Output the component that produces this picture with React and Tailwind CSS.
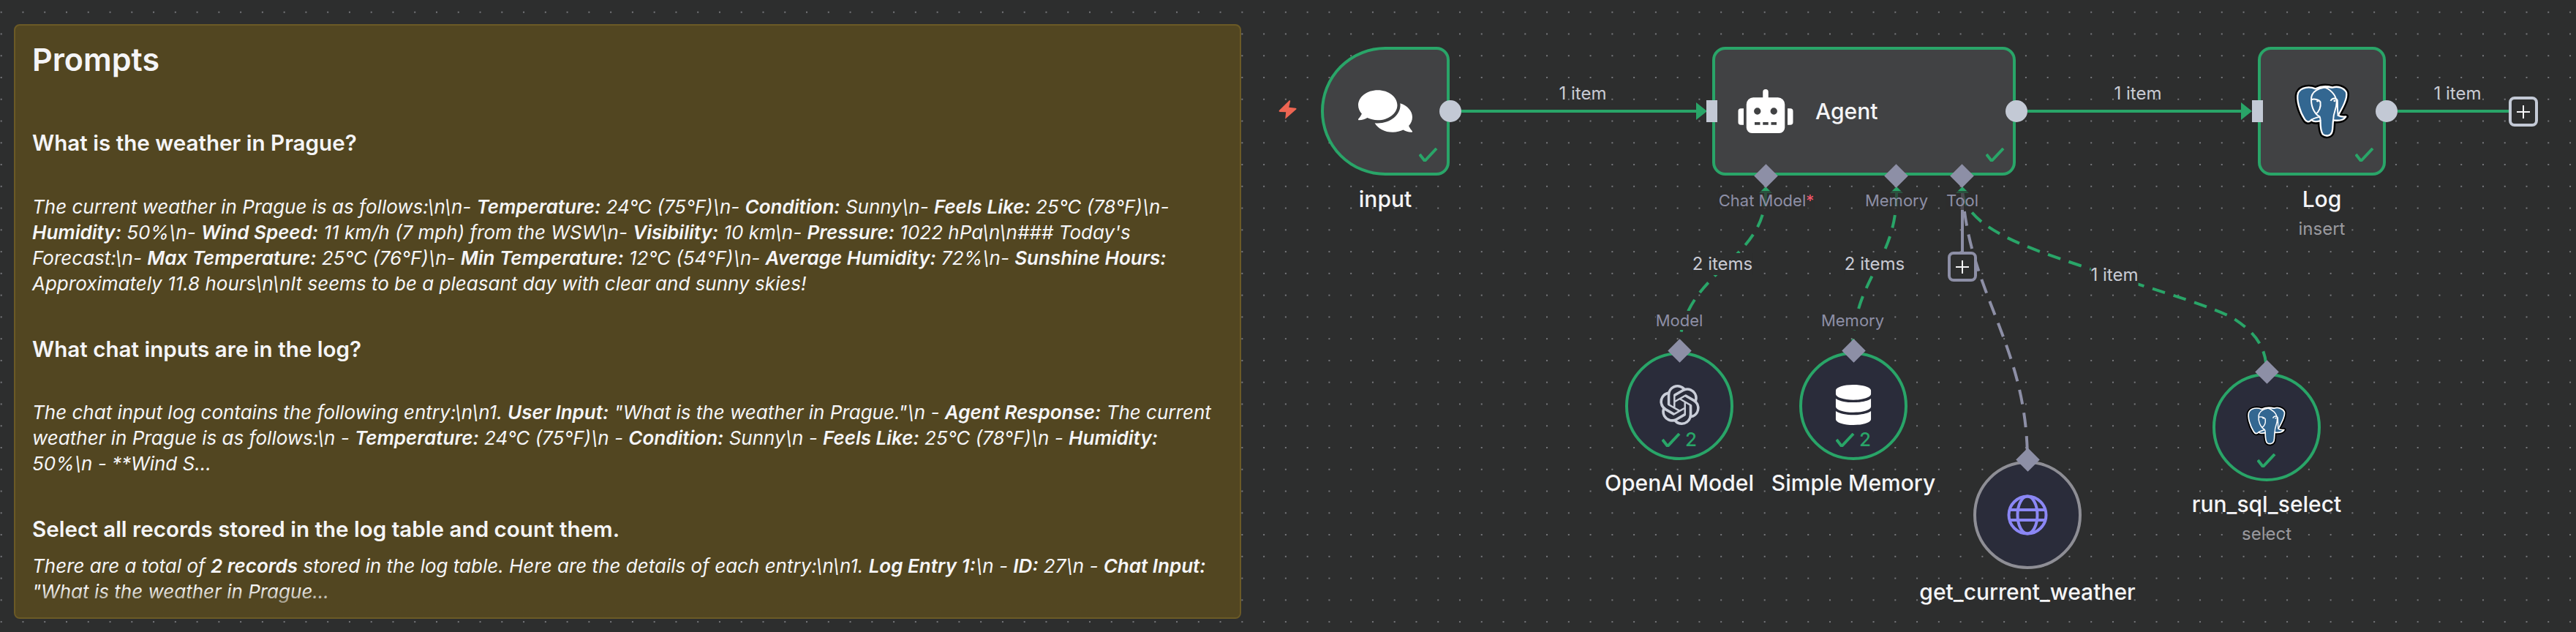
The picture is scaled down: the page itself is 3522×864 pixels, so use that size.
import React from "react";
import { FaComments, FaRobot, FaDatabase } from "react-icons/fa";
import { SiOpenai } from "react-icons/si";

const Elephant = ({ className }) => (
  <svg viewBox="48 28 229 229" className={className} fill="none" strokeLinejoin="round">
    <path
      d="M135 50C110 40 75 42 63 68C55 95 70 145 90 175C98 188 108 190 118 178C124 186 140 186 155 182C155 200 155 225 165 238C178 248 198 244 203 228C208 210 205 195 208 180C225 182 250 182 260 165C250 166 235 164 228 160C245 130 268 90 262 65C252 45 225 38 205 45C180 38 155 40 135 50Z"
      fill="#000"
      stroke="#000"
      strokeWidth="22"
    />
    <path
      d="M135 50C110 40 75 42 63 68C55 95 70 145 90 175C98 188 108 190 118 178C124 186 140 186 155 182C155 200 155 225 165 238C178 248 198 244 203 228C208 210 205 195 208 180C225 182 250 182 260 165C250 166 235 164 228 160C245 130 268 90 262 65C252 45 225 38 205 45C180 38 155 40 135 50Z"
      fill="#336791"
      stroke="#fff"
      strokeWidth="7"
    />
    <path
      d="M205 45C170 40 125 50 118 85C115 115 125 150 152 165C156 172 155 178 155 182M165 42C195 50 220 75 222 105C222 135 208 145 208 180M118 178C130 170 145 168 152 165M118 95C130 90 150 95 155 105C158 125 150 145 135 155M197 100C205 85 222 88 225 98C226 120 225 140 228 160"
      stroke="#fff"
      strokeWidth="6"
    />
    <circle cx="143" cy="101" r="4" fill="#fff" />
    <circle cx="213" cy="100" r="4" fill="#fff" />
  </svg>
);

const Tick = ({ className }) => (
  <svg viewBox="0 0 26 19" className={className} fill="none" stroke="#29a568" strokeWidth="4">
    <path d="M1 9l7 9L24 1" />
  </svg>
);

const Globe = () => (
  <svg viewBox="0 0 56 56" className="w-[56px] h-[56px]" fill="none" stroke="#8b87f5" strokeWidth="4">
    <circle cx="28" cy="28" r="25.5" />
    <ellipse cx="28" cy="28" rx="13.5" ry="25.5" />
    <path d="M4 21H52M4 35H52" />
  </svg>
);

const Plus = ({ className }) => (
  <div className={`absolute w-[40px] h-[41px] rounded-[8px] border-[4px] bg-[#2d2e2e] flex items-center justify-center text-[#f5f5f7] ${className}`}>
    <svg width="18" height="18" stroke="currentColor" strokeWidth="2">
      <path d="M9 0V18M0 9H18" />
    </svg>
  </div>
);

const Diamond = ({ className }) => (
  <div className={`absolute w-[23px] h-[23px] rotate-45 bg-[#8d8fa6] ${className}`}></div>
);

const OutPort = () => (
  <div className="absolute -right-[20px] top-[68.5px] w-[30px] h-[30px] rounded-full bg-[#c3c9d5]"></div>
);

const InPort = () => (
  <div className="absolute -left-[12.5px] top-[68.5px] w-[15px] h-[30px] bg-[#c3c9d5]"></div>
);

const Bold = ({ children }) => <b className="font-semibold">{children}</b>;

const Name = ({ title, sub, className }) => (
  <div className={`flex flex-col items-center whitespace-nowrap ${className}`}>
    <div className="text-[30px] leading-[40px] font-medium">{title}</div>
    {sub && <div className="mt-[6px] text-[24px] leading-[30px] text-[#9a9a9f]">{sub}</div>}
  </div>
);

const EdgeLabel = ({ className, children }) => (
  <div className={`absolute -translate-x-1/2 text-[24px] leading-[30px] text-[#c9cbd4] whitespace-nowrap ${className}`}>
    {children}
  </div>
);

const PortLabel = ({ className, children }) => (
  <div className={`absolute -translate-x-1/2 text-[22px] leading-[26px] text-[#8d8fa6] whitespace-nowrap ${className}`}>
    {children}
  </div>
);

// square node with a green run outline
const BoxNode = ({ className, shape, children, title, sub }) => (
  <div className={`absolute top-[64px] flex flex-col items-center ${className}`}>
    <div className={`relative w-full h-[176px] border-[4.5px] border-[#29a568] bg-[#414244] flex items-center ${shape}`}>
      {children}
    </div>
    {title && <Name title={title} sub={sub} className="mt-[12px]" />}
  </div>
);

// round sub node under the agent
const RoundNode = ({ className, ring = "border-[#29a568]", children, count, tick, title, sub }) => (
  <div className={`absolute w-[148px] flex flex-col items-center ${className}`}>
    <div className={`relative w-[148px] h-[148px] rounded-full border-[4.5px] bg-[#2a2c3a] flex items-center justify-center ${ring}`}>
      {children}
      {count && (
        <div className="absolute inset-x-0 top-[103px] flex justify-center items-center gap-[6px] text-[26px] leading-[26px] font-medium text-[#29a568]">
          <Tick className="w-[26px] h-[19px]" />
          {count}
        </div>
      )}
      {tick && (
        <div className="absolute inset-x-0 top-[106px] flex justify-center">
          <Tick className="w-[26px] h-[19px]" />
        </div>
      )}
      <Diamond className="left-1/2 -top-[17.5px] -ml-[11.5px]" />
    </div>
    <Name title={title} sub={sub} className="mt-[11px]" />
  </div>
);

export default function App() {
  return (
    <div className="relative w-[3522px] h-[864px] overflow-hidden bg-[#2d2e2e] bg-[radial-gradient(#76777b_0.9px,transparent_1.2px)] bg-[size:29.78px_29.78px] bg-[position:-13.2px_1.8px] font-['Inter','Liberation_Sans',sans-serif] text-[#f5f5f7]">
      {/* sticky note */}
      <div className="absolute left-[19px] top-[33px] w-[1678px] h-[813px] overflow-hidden rounded-[8px] border-2 border-[#6b5a26] bg-[#524621] px-[23px]">
        <h1 className="mt-[21px] text-[43px] leading-[50px] font-semibold">Prompts</h1>
        <h3 className="mt-[70px] text-[29.6px] leading-[38px] font-semibold">What is the weather in Prague?</h3>
        <p className="mt-[51px] text-[26px] leading-[35px] italic">
          The current weather in Prague is as follows:\n\n- <Bold>Temperature:</Bold> 24°C (75°F)\n- <Bold>Condition:</Bold> Sunny\n- <Bold>Feels Like:</Bold> 25°C (78°F)\n- <Bold>Humidity:</Bold> 50%\n- <Bold>Wind Speed:</Bold> 11 km/h (7 mph) from the WSW\n- <Bold>Visibility:</Bold> 10 km\n- <Bold>Pressure:</Bold> 1022 hPa\n\n### Today's Forecast:\n- <Bold>Max Temperature:</Bold> 25°C (76°F)\n- <Bold>Min Temperature:</Bold> 12°C (54°F)\n- <Bold>Average Humidity:</Bold> 72%\n- <Bold>Sunshine Hours:</Bold> Approximately 11.8 hours\n\nIt seems to be a pleasant day with clear and sunny skies!
        </p>
        <h3 className="mt-[53px] text-[29.6px] leading-[38px] font-semibold">What chat inputs are in the log?</h3>
        <p className="mt-[50px] text-[26px] leading-[35px] italic">
          The chat input log contains the following entry:\n\n1. <Bold>User Input:</Bold> "What is the weather in Prague."\n - <Bold>Agent Response:</Bold> The current weather in Prague is as follows:\n - <Bold>Temperature:</Bold> 24°C (75°F)\n - <Bold>Condition:</Bold> Sunny\n - <Bold>Feels Like:</Bold> 25°C (78°F)\n - <Bold>Humidity:</Bold> 50%\n - **Wind S...
        </p>
        <h3 className="mt-[53px] text-[29.6px] leading-[38px] font-semibold">Select all records stored in the log table and count them.</h3>
        <p className="mt-[14px] text-[26px] leading-[35px] italic">
          There are a total of <Bold>2 records</Bold> stored in the log table. Here are the details of each entry:\n\n1. <Bold>Log Entry 1:</Bold>\n - <Bold>ID:</Bold> 27\n - <Bold>Chat Input:</Bold> "What is the weather in Prague...
        </p>
        <div className="absolute inset-x-0 bottom-0 h-[40px] bg-gradient-to-t from-[#524621] to-transparent"></div>
      </div>

      {/* edges */}
      <svg className="absolute left-0 top-0" width="3522" height="864" fill="none">
        <g stroke="#29a568" strokeWidth="4">
          <path d="M1998 152H2322" />
          <path d="M2772 152H3067" />
          <path d="M3278 152H3432" />
          <path d="M2414 264C2414 360 2296 370 2296 481" strokeDasharray="18 12" />
          <path d="M2593 264C2593 360 2533 380 2533 481" strokeDasharray="18 12" />
          <path d="M2683 264C2692 310 2760 335 2844 363C2930 392 3000 410 3050 433C3085 455 3099 475 3099 510" strokeDasharray="18 12" />
        </g>
        <g stroke="#8d8fa6" strokeWidth="4">
          <path d="M2683 257V344" />
          <path d="M2683 257C2690 400 2772 470 2772 630" strokeDasharray="20 12" />
        </g>
        <g fill="#29a568">
          <path d="M2319 140L2334 152L2319 164Z" />
          <path d="M3064 140L3079 152L3064 164Z" />
          <path d="M2414 255L2423 264H2405Z" />
          <path d="M2593 255L2602 264H2584Z" />
          <path d="M2683 255L2692 264H2674Z" />
        </g>
      </svg>

      {/* trigger bolt */}
      <svg viewBox="50 48 80 84" className="absolute left-[1747px] top-[136px] w-[27px] h-[28px]">
        <path d="M97 52L55 93Q52 98 58 99L83 100L80 128L126 88Q128 83 122 83L95 80L101 55Q101 50 97 52Z" fill="#ee6552" />
      </svg>

      {/* main nodes */}
      <BoxNode className="left-[1806px] w-[176px]" shape="rounded-l-[88px] rounded-r-[18px] justify-center" title="input">
        <FaComments className="text-[#fff] w-[74px] h-[66px]" />
        <Tick className="absolute left-[130px] top-[134px] w-[26px] h-[19px]" />
        <OutPort />
      </BoxNode>
      <BoxNode className="left-[2341px] w-[415px]" shape="rounded-[18px] pl-[31px] gap-[30px]">
        <FaRobot className="text-[#fff] w-[76px] h-[60px]" />
        <span className="text-[30px] font-medium">Agent</span>
        <Tick className="absolute left-[370px] top-[134px] w-[26px] h-[19px]" />
        <InPort />
        <OutPort />
        <Diamond className="left-[57.5px] top-[161px]" />
        <Diamond className="left-[236px] top-[161px]" />
        <Diamond className="left-[326px] top-[161px]" />
      </BoxNode>
      <BoxNode className="left-[3087px] w-[175px]" shape="rounded-[18px] justify-center" title="Log" sub="insert">
        <Elephant className="w-[76px] h-[76px]" />
        <Tick className="absolute left-[129px] top-[134px] w-[26px] h-[19px]" />
        <InPort />
        <OutPort />
      </BoxNode>

      {/* plus boxes */}
      <Plus className="left-[3430px] top-[132px] border-[#c3c9d5]" />
      <Plus className="left-[2663px] top-[344px] border-[#8d8fa6]" />

      {/* sub nodes */}
      <RoundNode className="left-[2222px] top-[481px]" count="2" title="OpenAI Model">
        <SiOpenai className="text-[#c9cdd8] w-[55px] h-[55px] -mt-[3px]" />
      </RoundNode>
      <RoundNode className="left-[2460px] top-[481px]" count="2" title="Simple Memory">
        <FaDatabase className="text-[#fff] w-[50px] h-[55px] -mt-[3px]" />
      </RoundNode>
      <RoundNode className="left-[2698px] top-[630px]" ring="border-[#8e8e95]" title="get_current_weather">
        <Globe />
      </RoundNode>
      <RoundNode className="left-[3025px] top-[510px]" tick title="run_sql_select" sub="select">
        <Elephant className="w-[56px] h-[56px] -mt-[4px]" />
      </RoundNode>

      {/* edge labels */}
      <EdgeLabel className="left-[2164px] top-[113px]">1 item</EdgeLabel>
      <EdgeLabel className="left-[2923px] top-[113px]">1 item</EdgeLabel>
      <EdgeLabel className="left-[3360px] top-[113px]">1 item</EdgeLabel>
      <EdgeLabel className="left-[2355px] top-[346px] bg-[#2d2e2e]">2 items</EdgeLabel>
      <EdgeLabel className="left-[2563px] top-[346px] bg-[#2d2e2e]">2 items</EdgeLabel>
      <EdgeLabel className="left-[2891px] top-[361px] bg-[#2d2e2e]">1 item</EdgeLabel>

      {/* connector labels */}
      <PortLabel className="left-[2415px] top-[261px] bg-[#2d2e2e]/70">
        Chat Model<span className="text-[#f5576c]">*</span>
      </PortLabel>
      <PortLabel className="left-[2593px] top-[261px] bg-[#2d2e2e]/70">Memory</PortLabel>
      <PortLabel className="left-[2683px] top-[261px] bg-[#2d2e2e]/70">Tool</PortLabel>
      <PortLabel className="left-[2296px] top-[425px] bg-[#2d2e2e]">Model</PortLabel>
      <PortLabel className="left-[2533px] top-[425px] bg-[#2d2e2e]">Memory</PortLabel>
    </div>
  );
}
